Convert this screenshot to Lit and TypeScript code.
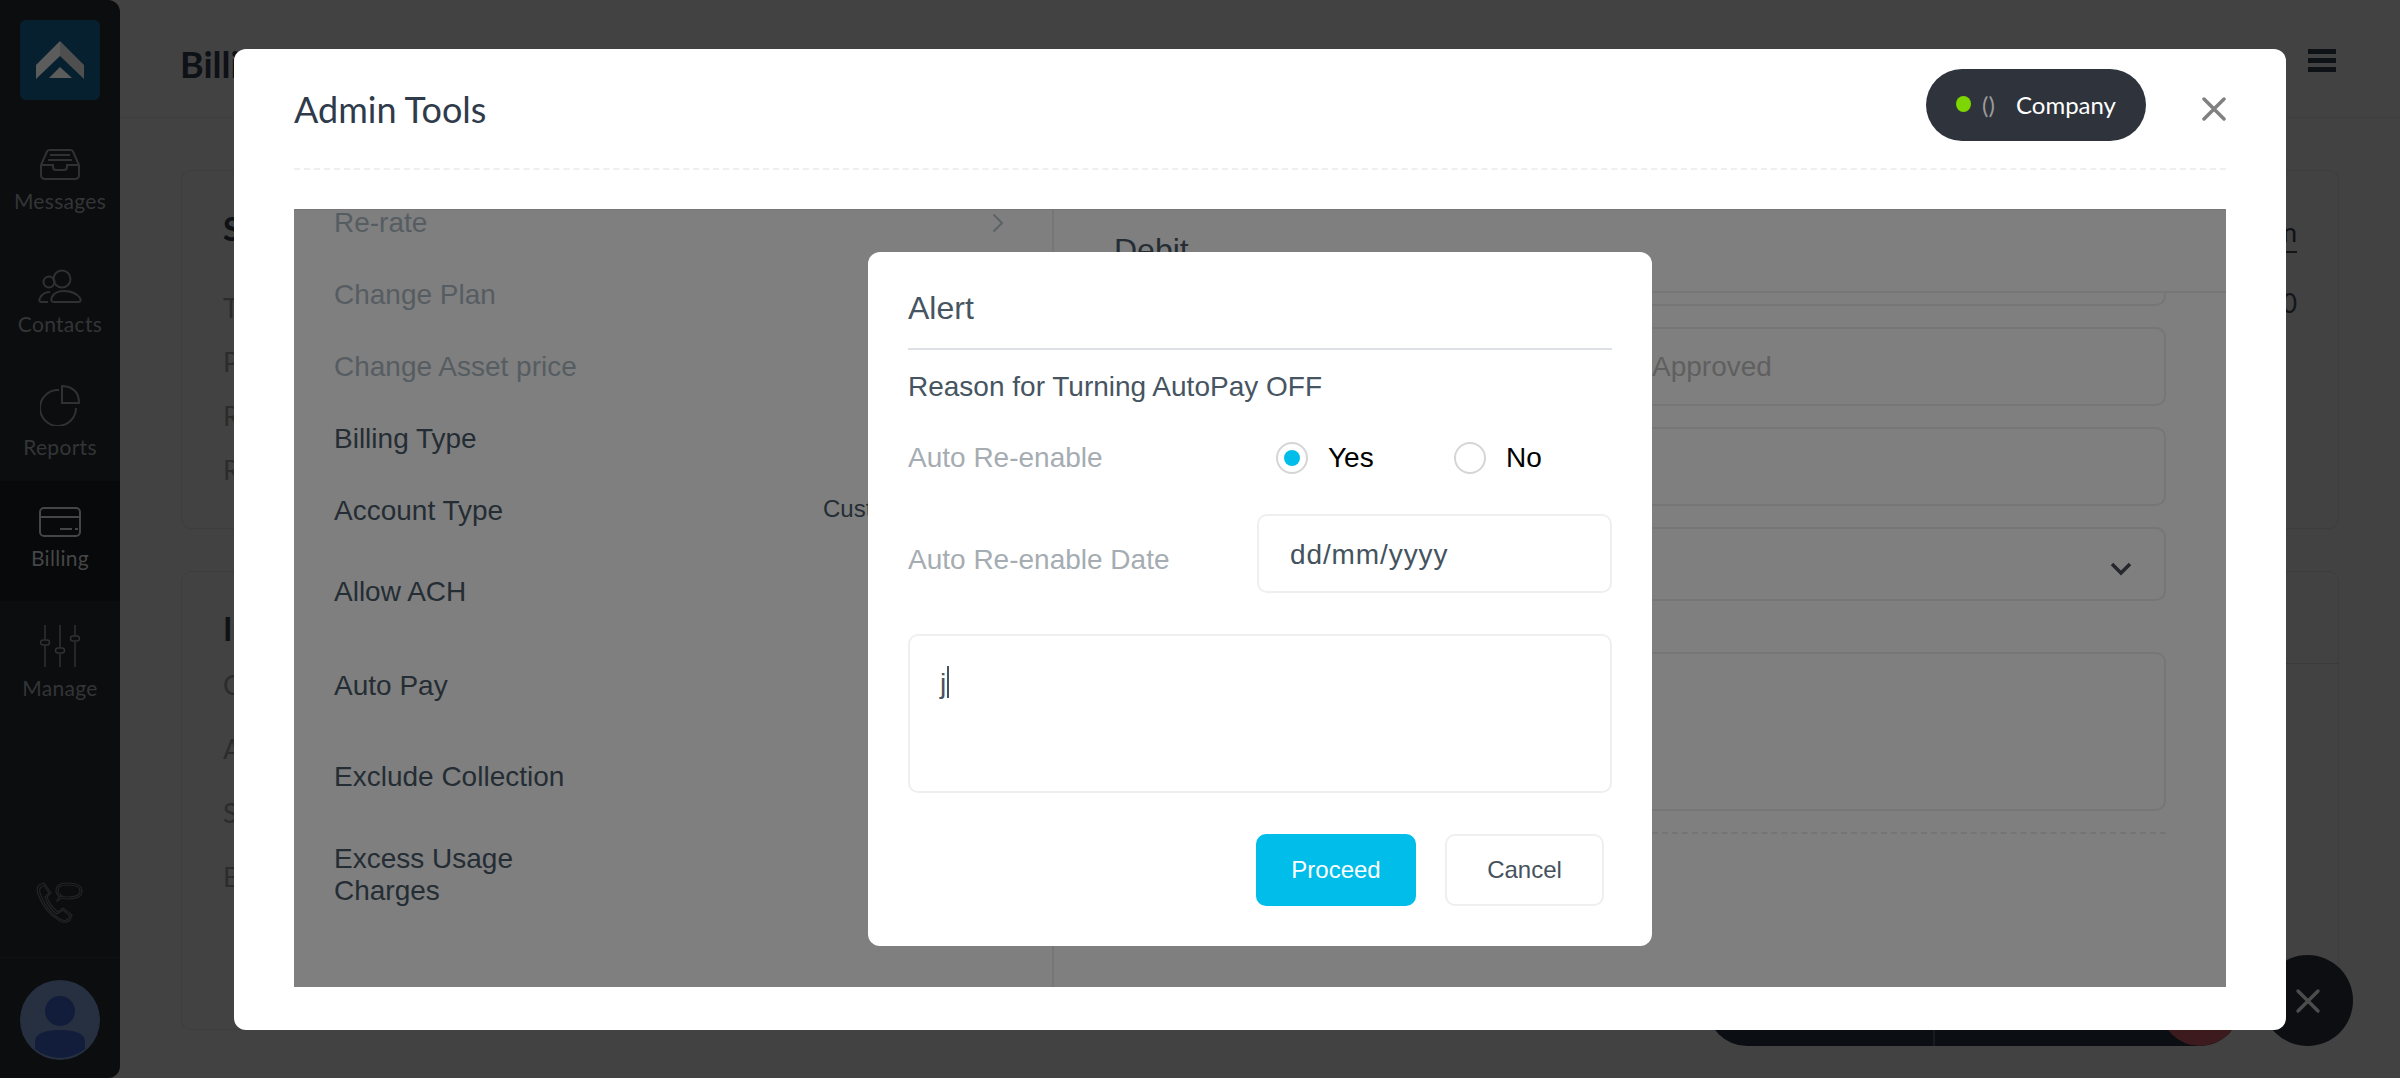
import { LitElement, html, css } from 'lit';
import { customElement } from 'lit/decorators.js';

interface FormRow {
  label: string;
  height: number;
  muted?: boolean;
  lines?: string[];
  value?: string;
}

const NAV = [
  { key: 'messages', label: 'Messages' },
  { key: 'contacts', label: 'Contacts' },
  { key: 'reports', label: 'Reports' },
  { key: 'billing', label: 'Billing', active: true },
  { key: 'manage', label: 'Manage' },
];

const ROWS: FormRow[] = [
  { label: 'Re-rate', height: 49, muted: true },
  { label: 'Change Plan', height: 72, muted: true },
  { label: 'Change Asset price', height: 72, muted: true },
  { label: 'Billing Type', height: 72 },
  { label: 'Account Type', height: 72, value: 'Customer' },
  { label: 'Allow ACH', height: 90 },
  { label: 'Auto Pay', height: 98 },
  { label: 'Exclude Collection', height: 84 },
  { label: 'Excess Usage', height: 112, lines: ['Excess Usage', 'Charges'] },
];

@customElement('app-root')
export class AppRoot extends LitElement {
  static styles = css`
    :host {
      display: block;
      position: relative;
      width: 2400px;
      height: 1078px;
      overflow: hidden;
      font-family: Lato, 'Liberation Sans', sans-serif;
      background: #424242;
    }
    .page {
      display: flex;
      height: 1078px;
    }
    .sidebar {
      width: 120px;
      flex: none;
      display: flex;
      flex-direction: column;
      background: #0b0d0f;
      border-radius: 0 12px 12px 0;
      overflow: hidden;
    }
    .logo {
      width: 80px;
      height: 80px;
      margin: 20px 20px 21px;
      background: #07202f;
      border-radius: 6px;
    }
    .logo svg,
    .nav-icon svg,
    .avatar svg {
      display: block;
    }
    .nav-item {
      height: 120px;
      box-sizing: border-box;
      padding-top: 2px;
      display: flex;
      flex-direction: column;
      align-items: center;
      justify-content: center;
      gap: 9px;
      color: #333537;
      font-size: 21px;
      line-height: 24px;
      letter-spacing: 0.3px;
    }
    .nav-item.messages {
      padding: 0 0 2px;
    }
    .nav-item.active {
      padding: 0 0 5px;
      background: #08090b;
      color: #454647;
    }
    .side-foot {
      margin-top: auto;
    }
    .phone {
      display: flex;
      justify-content: center;
      padding-bottom: 33px;
      border-bottom: 1px solid #111316;
    }
    .avatar {
      padding: 22px 20px 18px;
    }
    .main {
      flex: 1;
      min-width: 0;
    }
    .topbar {
      height: 118px;
      box-sizing: border-box;
      display: flex;
      align-items: center;
      justify-content: space-between;
      padding: 0 64px 0 60px;
      border-bottom: 1px solid #3e3e3e;
      font-size: 36px;
      font-weight: 700;
      color: #0e1116;
    }
    .topbar span {
      margin-top: 10px;
    }
    .burger {
      display: flex;
      flex-direction: column;
      gap: 4px;
      margin-top: 3px;
    }
    .burger i {
      display: block;
      width: 28px;
      height: 5px;
      background: #0e1116;
    }
    .cards {
      padding: 52px 61px 0;
      display: flex;
      flex-direction: column;
      gap: 42px;
    }
    .card {
      position: relative;
      box-sizing: border-box;
      border: 1px solid #3d3d3d;
      border-radius: 10px;
      padding: 0 41px;
      color: #2c2c2c;
      font-size: 27px;
    }
    .card.one {
      height: 359px;
    }
    .card.two {
      height: 459px;
    }
    .card h3 {
      margin: 0;
      font-size: 32px;
      line-height: 40px;
      font-weight: 700;
      color: #0e1116;
    }
    .card.one h3 {
      padding: 38px 0 32px;
    }
    .card.two h3 {
      padding: 37px 0 4px;
    }
    .card.one .line {
      height: 54px;
      line-height: 54px;
    }
    .card.two .line {
      height: 64px;
      line-height: 64px;
    }
    .card-side {
      position: absolute;
      top: 48px;
      right: 41px;
      text-align: right;
      font-size: 26px;
      color: #14161a;
    }
    .card-side span {
      display: block;
    }
    .card-side .link {
      border-bottom: 2px solid #14161a;
      padding-bottom: 6px;
      margin-bottom: 34px;
      line-height: 26px;
      color: #0e1116;
    }
    .card-rule {
      position: absolute;
      left: 1800px;
      right: 0;
      top: 91px;
      border-top: 1px solid #3b3b3b;
    }
    .dock {
      position: absolute;
      left: 1707px;
      top: 966px;
      width: 533px;
      height: 80px;
      display: flex;
      background: #0b0e12;
      border-radius: 40px;
      overflow: hidden;
    }
    .dock b {
      width: 226px;
      border-right: 2px solid #181b1f;
    }
    .dock i {
      margin-left: auto;
      width: 80px;
      height: 80px;
      border-radius: 50%;
      background: #3d1a1e;
    }
    .fab {
      position: absolute;
      left: 2262px;
      top: 955px;
      width: 91px;
      height: 91px;
      display: flex;
      align-items: center;
      justify-content: center;
      border-radius: 50%;
      background: #0c0e11;
    }
    .tools {
      position: absolute;
      left: 234px;
      top: 49px;
      width: 2052px;
      height: 981px;
      box-sizing: border-box;
      display: flex;
      flex-direction: column;
      padding: 0 60px 43px;
      background: #fff;
      border-radius: 12px;
    }
    .tools-head {
      height: 121px;
      box-sizing: border-box;
      flex: none;
      display: flex;
      align-items: center;
      border-bottom: 2px dashed #efefef;
    }
    .tools-head h2 {
      margin: 0 auto 0 0;
      font-size: 36px;
      font-weight: 400;
      color: #2f3b4b;
    }
    .pill {
      align-self: flex-start;
      box-sizing: border-box;
      width: 220px;
      height: 72px;
      margin-top: 20px;
      padding-left: 30px;
      display: flex;
      align-items: center;
      border-radius: 36px;
      background: #2f343c;
      color: #fff;
      font-size: 24px;
    }
    .pill span {
      margin-top: -2px;
    }
    .pill .dot {
      width: 15px;
      height: 16px;
      border-radius: 50%;
      background: #7ed600;
      margin: -3px 11px 0 0;
    }
    .paren {
      width: 34px;
      color: #9a9a9a;
    }
    .close {
      display: block;
      margin-left: 56px;
    }
    .panel {
      position: relative;
      flex: 1;
      min-height: 0;
      margin-top: 39px;
      display: flex;
      background: #7f7f7f;
      border-top: 1px solid #777;
      font-family: 'Liberation Sans', Arial, sans-serif;
      font-size: 28px;
      color: #252d34;
    }
    .menu {
      width: 760px;
      flex: none;
      box-sizing: border-box;
      padding: 0 48px 0 40px;
      border-right: 2px solid #777;
    }
    .row {
      position: relative;
      display: flex;
      align-items: center;
      line-height: 32px;
    }
    .row:first-child {
      align-items: flex-start;
      line-height: 26px;
    }
    .row.muted {
      color: #565d62;
    }
    .row .value {
      position: absolute;
      left: 489px;
      top: 50%;
      margin-top: -18px;
      font-size: 24px;
    }
    .row svg {
      position: absolute;
      right: 0;
      top: 3px;
    }
    .form {
      flex: 1;
      min-width: 0;
    }
    .form-head {
      height: 83px;
      box-sizing: border-box;
      padding-left: 60px;
      display: flex;
      align-items: center;
      border-bottom: 2px solid #777;
      font-size: 32px;
    }
    .form-body {
      overflow: hidden;
      padding: 0 60px;
    }
    .form-stack {
      margin-top: -66px;
      display: flex;
      flex-direction: column;
      gap: 21px;
    }
    .field {
      box-sizing: border-box;
      height: 79px;
      display: flex;
      align-items: center;
      justify-content: flex-end;
      padding: 0 32px;
      border: 2px solid #767676;
      border-radius: 10px;
      color: #5f5f5f;
    }
    .field.approved {
      justify-content: flex-start;
      padding-left: 536px;
    }
    .field.select {
      height: 74px;
    }
    .field.select svg {
      margin-top: 10px;
    }
    .field.area {
      height: 159px;
      margin-top: 30px;
    }
    .form-rule {
      margin-top: 21px;
      border-top: 2px dashed #757575;
    }
    .scrim {
      position: absolute;
      inset: 0;
      display: flex;
      align-items: center;
      justify-content: center;
    }
    .alert {
      width: 784px;
      height: 694px;
      box-sizing: border-box;
      padding: 0 40px;
      background: #fff;
      border-radius: 12px;
      margin-top: 1px;
      color: #465561;
      font-size: 28px;
    }
    .alert-title {
      padding: 36px 0 20px;
      border-bottom: 2px solid #dde1e5;
      font-size: 32px;
      line-height: 40px;
    }
    .reason {
      margin-top: 19px;
      line-height: 36px;
    }
    .form-line {
      display: flex;
      color: #a5acb2;
    }
    .form-line .name {
      width: 349px;
      flex: none;
    }
    .radios {
      margin-top: 33px;
      height: 40px;
      align-items: center;
    }
    .radio {
      display: flex;
      flex: none;
      align-items: center;
      color: #000;
      gap: 20px;
    }
    .radio:first-of-type {
      width: 178px;
      margin-left: 19px;
    }
    .ring {
      width: 32px;
      height: 32px;
      box-sizing: border-box;
      display: flex;
      align-items: center;
      justify-content: center;
      border: 2px solid #d5d5d5;
      border-radius: 50%;
    }
    .ring i {
      width: 16px;
      height: 16px;
      border-radius: 50%;
      background: #00bde9;
    }
    .date-line {
      margin-top: 36px;
    }
    .date-line .name {
      padding-top: 28px;
      line-height: 36px;
    }
    .input {
      flex: 1;
      height: 79px;
      box-sizing: border-box;
      padding: 0 31px;
      display: flex;
      align-items: center;
      border: 2px solid #eeeff1;
      border-radius: 10px;
      color: #45535e;
      letter-spacing: 0.9px;
    }
    .input span {
      margin-top: 2px;
    }
    .note {
      height: 159px;
      margin-top: 41px;
      box-sizing: border-box;
      padding: 30px;
      display: flex;
      align-items: flex-start;
      border: 2px solid #eeeff1;
      border-radius: 10px;
      line-height: 36px;
    }
    .caret {
      width: 2px;
      height: 32px;
      margin-left: 1px;
      background: #45535e;
    }
    .actions {
      display: flex;
      justify-content: flex-end;
      gap: 29px;
      margin: 41px 8px 0 0;
    }
    .btn {
      height: 72px;
      box-sizing: border-box;
      display: flex;
      align-items: center;
      justify-content: center;
      border-radius: 10px;
      font-size: 24px;
    }
    .btn.primary {
      width: 160px;
      background: #00bde9;
      color: #fff;
    }
    .btn.ghost {
      width: 159px;
      border: 2px solid #eeeff1;
      color: #45525d;
    }
  `;

  private navIcon(key: string) {
    const c = key === 'billing' ? '#444546' : '#2f3133';
    switch (key) {
      case 'messages':
        return html`<svg width="42" height="32" viewBox="0 0 42 32" fill="none" stroke=${c} stroke-width="2">
          <path d="M2 17 8 3.500Q8.600 2 10.500 2H31.500Q33.400 2 34 3.500L40 17V27Q40 31 36 31H6Q2 31 2 27Z"/>
          <path d="M2 17H14V19Q14 22 17 22H25Q28 22 28 19V17H40M9 12H33M11 7H31"/>
        </svg>`;
      case 'contacts':
        return html`<svg width="44" height="34" viewBox="0 0 44 34" fill="none" stroke=${c} stroke-width="2">
          <circle cx="24" cy="10" r="8.500"/>
          <circle cx="11" cy="13" r="5.500"/>
          <path d="M16 33Q12 33 14 28Q17 22 26 22Q37 22 42 29Q44 33 40 33Z"/>
          <path d="M10 33H4Q0 33 2 29Q5 23 12 23"/>
        </svg>`;
      case 'reports':
        return html`<svg width="40" height="41" viewBox="0 0 40 41" fill="none" stroke=${c} stroke-width="2">
          <path d="M19 5A18 18 0 1 0 36 23"/>
          <path d="M22 1V18H39Q39 2 22 1Z"/>
        </svg>`;
      case 'billing':
        return html`<svg width="42" height="30" viewBox="0 0 42 30" fill="none" stroke=${c} stroke-width="2">
          <rect x="1" y="1" width="40" height="28" rx="4"/>
          <path d="M1 10H41M21 22H33M36 22H39"/>
        </svg>`;
      default:
        return html`<svg width="40" height="42" viewBox="0 0 40 42" fill="none" stroke=${c} stroke-width="1.500">
          <path d="M5 0V15M5 21V42M20 0V23M20 29V42M35 0V11M35 17V42"/>
          <rect x="0.500" y="15" width="9" height="5" rx="2.500"/>
          <rect x="15.500" y="23" width="9" height="5" rx="2.500"/>
          <rect x="30.500" y="11" width="9" height="5" rx="2.500"/>
        </svg>`;
    }
  }

  render() {
    return html`
      <div class="page">
        <aside class="sidebar">
          <div class="logo">
            <svg width="80" height="80" viewBox="0 0 80 80">
              <path d="M40 21 16 45V59L40 36Z" fill="#5c5c5c"/>
              <path d="M40 21 64 45V59L40 36Z" fill="#4f4f4f"/>
              <path d="M40 47 29 58H52Z" fill="#5c5c5c"/>
            </svg>
          </div>
          ${NAV.map(
            (item) => html`
              <div class="nav-item ${item.key} ${item.active ? 'active' : ''}">
                <div class="nav-icon">${this.navIcon(item.key)}</div>
                <span>${item.label}</span>
              </div>
            `
          )}
          <div class="side-foot">
            <div class="phone">
              <svg width="48" height="42" viewBox="0 0 48 42" fill="none" stroke="#222427" stroke-width="1.200">
                <path d="M3 3 8 1 15 11 11 15Q14 24 22 30L27 26 36 33 34 38Q30 42 24 39Q8 30 2 12Q0 6 3 3Z"/>
                <path d="M5 5 8 3.500 13 11 9 15Q12 26 21 32L27 28 34 34 32 37Q29 40 24 37Q10 29 4 11Q3 7 5 5Z"/>
                <path d="M31 1Q46 1 46 9T32 17Q28 17 26 16L21 19 23 14Q20 12 20 9 20 1 31 1Z"/>
                <path d="M31 3Q44 3 44 9T32 15Q28 15 26 14L24 15 25 13Q22 11 22 9 22 3 31 3Z"/>
              </svg>
            </div>
            <div class="avatar">
              <svg width="80" height="80" viewBox="0 0 80 80">
                <circle cx="40" cy="40" r="40" fill="#263040"/>
                <circle cx="40" cy="31" r="15" fill="#111d3a"/>
                <path d="M15 69V62Q15 50 40 50T65 62V69A40 40 0 0 1 15 69Z" fill="#111d3a"/>
              </svg>
            </div>
          </div>
        </aside>
        <main class="main">
          <div class="topbar">
            <span>Billing</span>
            <div class="burger"><i></i><i></i><i></i></div>
          </div>
          <div class="cards">
            <section class="card one">
              <h3>Status</h3>
              <div class="line">Total</div>
              <div class="line">Plan</div>
              <div class="line">Rate</div>
              <div class="line">Renewal</div>
              <div class="card-side">
                <span class="link">Action</span>
                <span>$0.00</span>
              </div>
            </section>
            <section class="card two">
              <div class="card-rule"></div>
              <h3>Invoices</h3>
              <div class="line">Current</div>
              <div class="line">Amount</div>
              <div class="line">Status</div>
              <div class="line">Balance</div>
            </section>
          </div>
        </main>
      </div>

      <div class="dock"><b></b><i></i></div>
      <div class="fab">
        <svg width="26" height="26" viewBox="0 0 26 26" stroke="#4c4c4c" stroke-width="3.500" stroke-linecap="round">
          <path d="M3 3 23 23M23 3 3 23"/>
        </svg>
      </div>

      <div class="tools">
        <header class="tools-head">
          <h2>Admin Tools</h2>
          <div class="pill">
            <span class="dot"></span>
            <span class="paren">()</span>
            <span>Company</span>
          </div>
          <svg class="close" width="24" height="24" viewBox="0 0 24 24" stroke="#808080" stroke-width="3.500" stroke-linecap="round">
            <path d="M2 2 22 22M22 2 2 22"/>
          </svg>
        </header>
        <div class="panel">
          <div class="menu">
            ${ROWS.map(
              (row, i) => html`
                <div class="row ${row.muted ? 'muted' : ''}" style="height: ${row.height}px">
                  ${row.lines ? html`<span>${row.lines[0]}<br />${row.lines[1]}</span>` : html`<span>${row.label}</span>`}
                  ${row.value ? html`<span class="value">${row.value}</span>` : ''}
                  ${i === 0
                    ? html`<svg width="12" height="20" viewBox="0 0 12 20" fill="none" stroke="#5c6266" stroke-width="2"><path d="M1.500 1.500 10 10 1.500 18.500"/></svg>`
                    : ''}
                </div>
              `
            )}
          </div>
          <div class="form">
            <div class="form-head">Debit</div>
            <div class="form-body">
              <div class="form-stack">
                <div class="field"></div>
                <div class="field approved">Approved</div>
                <div class="field"></div>
                <div class="field select">
                  <svg width="22" height="14" viewBox="0 0 22 14" fill="none" stroke="#26282e" stroke-width="3.500">
                    <path d="M2 2 11 11 20 2"/>
                  </svg>
                </div>
                <div class="field area"></div>
              </div>
              <div class="form-rule"></div>
            </div>
          </div>
          <div class="scrim">
            <div class="alert">
              <div class="alert-title">Alert</div>
              <div class="reason">Reason for Turning AutoPay OFF</div>
              <div class="form-line radios">
                <span class="name">Auto Re-enable</span>
                <label class="radio"><span class="ring"><i></i></span>Yes</label>
                <label class="radio"><span class="ring"></span>No</label>
              </div>
              <div class="form-line date-line">
                <span class="name">Auto Re-enable Date</span>
                <div class="input"><span>dd/mm/yyyy</span></div>
              </div>
              <div class="note"><span>j</span><span class="caret"></span></div>
              <div class="actions">
                <div class="btn primary">Proceed</div>
                <div class="btn ghost">Cancel</div>
              </div>
            </div>
          </div>
        </div>
      </div>
    `;
  }
}

declare global {
  interface HTMLElementTagNameMap {
    'app-root': AppRoot;
  }
}
